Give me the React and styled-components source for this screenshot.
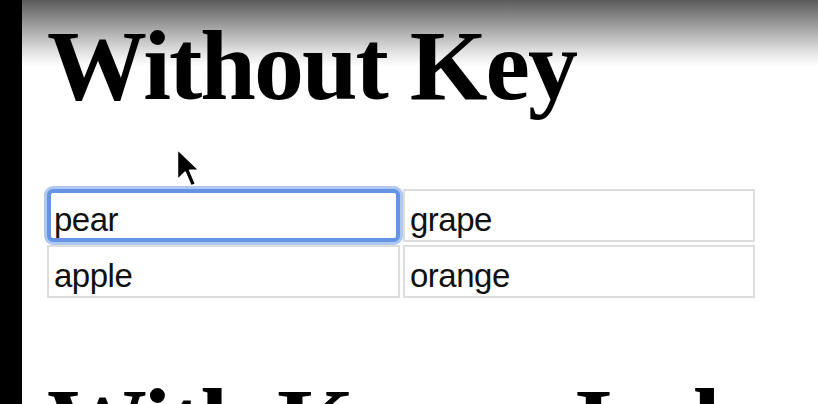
import React from "react";
import styled, { createGlobalStyle } from "styled-components";

const Global = createGlobalStyle`
  html, body { margin: 0; padding: 0; background: #fff; }
  body { overflow: hidden; }
`;

const Frame = styled.div`
  display: flex;
  width: 818px;
  height: 404px;
  overflow: hidden;
  position: relative;
`;

const SideBar = styled.div`
  flex: 0 0 22px;
  background: #000;
`;

const Page = styled.main`
  flex: 1;
  padding: 16px 0 0 25px;
  background: linear-gradient(
    to bottom,
    #5b5b5b 0px,
    #858585 16px,
    #b4b4b4 34px,
    #e2e2e2 52px,
    #ffffff 66px
  );
`;

const Heading = styled.h1`
  margin: ${(p) => p.$top || 0}px 0 0 0;
  font-family: "Liberation Serif", "Times New Roman", serif;
  font-weight: 700;
  font-size: 100px;
  line-height: 100px;
  letter-spacing: -2px;
  color: #000;
  white-space: nowrap;
`;

const Grid = styled.div`
  display: grid;
  grid-template-columns: 353px 352px;
  grid-auto-rows: 53px;
  gap: 3px;
  margin-top: 73px;
`;

const Field = styled.input`
  box-sizing: border-box;
  width: 100%;
  height: 53px;
  margin: 0;
  padding: 8px 5px 0 5px;
  border: 2px solid #dcdcdc;
  border-radius: 0;
  background: #fff;
  font-family: "Liberation Sans", Arial, sans-serif;
  font-size: 33px;
  letter-spacing: -0.5px;
  color: #111;
  outline: none;
  position: relative;

  ${(p) =>
    p.$focused &&
    `
    z-index: 1;
    border: 4px solid #6694e5;
    border-radius: 6px;
    padding-left: 3px;
    box-shadow: 0 0 0 3px rgba(110, 155, 232, 0.55);
  `}
`;

const Cursor = styled.svg`
  position: absolute;
  left: 175px;
  top: 147px;
  width: 26px;
  height: 41px;
  pointer-events: none;
`;

const fruits = [
  ["pear", "grape"],
  ["apple", "orange"],
];

export default function App() {
  return (
    <>
      <Global />
      <Frame>
        <SideBar />
        <Page>
          <Heading>Without Key</Heading>
          <Grid>
            {fruits.flat().map((f, i) => (
              <Field key={f} defaultValue={f} $focused={i === 0} readOnly />
            ))}
          </Grid>
          <Heading $top={76}>With Key as Index</Heading>
        </Page>
        <Cursor viewBox="0 0 13 21">
          <path
            d="M1 1 L1 17 L5 13 L8 20 L10.5 19 L7.5 12 L12.5 12 Z"
            fill="#000"
            stroke="#fff"
            strokeWidth="1"
            strokeLinejoin="round"
          />
        </Cursor>
      </Frame>
    </>
  );
}
